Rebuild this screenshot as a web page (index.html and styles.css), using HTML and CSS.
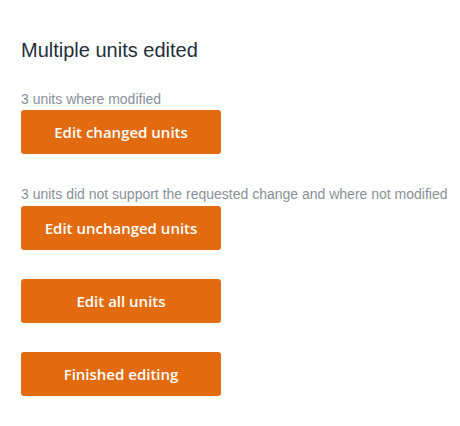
FILE: index.html
```html
<!DOCTYPE html>
<html>
<head>
<meta charset="utf-8">
<link rel="stylesheet" href="styles.css">
</head>
<body>
<div class="panel">
  <h1 class="title">Multiple units edited</h1>
  <p class="note note-first">3 units where modified</p>
  <button class="btn">Edit changed units</button>
  <p class="note note-second">3 units did not support the requested change and where not modified</p>
  <button class="btn">Edit unchanged units</button>
  <button class="btn btn-spaced">Edit all units</button>
  <button class="btn btn-spaced">Finished editing</button>
</div>
</body>
</html>
```
FILE: styles.css
```css
html, body {
  margin: 0;
  padding: 0;
  background: #ffffff;
}
.panel {
  display: flex;
  flex-direction: column;
  align-items: flex-start;
  padding: 38px 0 0 21px;
}
.title {
  margin: 0;
  font-family: "Liberation Sans", Arial, sans-serif;
  font-weight: normal;
  font-size: 20px;
  line-height: 24px;
  color: #242e39;
}
.note {
  margin: 0;
  font-family: "Liberation Sans", Arial, sans-serif;
  font-size: 14px;
  line-height: 16px;
  color: #8a9099;
  white-space: nowrap;
}
.note-first {
  margin-top: 29px;
  margin-bottom: 3px;
}
.note-second {
  margin-top: 32px;
  margin-bottom: 4px;
}
.btn {
  width: 200px;
  height: 44px;
  border: none;
  border-radius: 3px;
  background: #e26b10;
  color: #ffffff;
  font-family: "Open Sans", sans-serif;
  font-weight: 600;
  font-size: 15px;
  padding: 0;
}
.btn-spaced {
  margin-top: 29px;
}
```
